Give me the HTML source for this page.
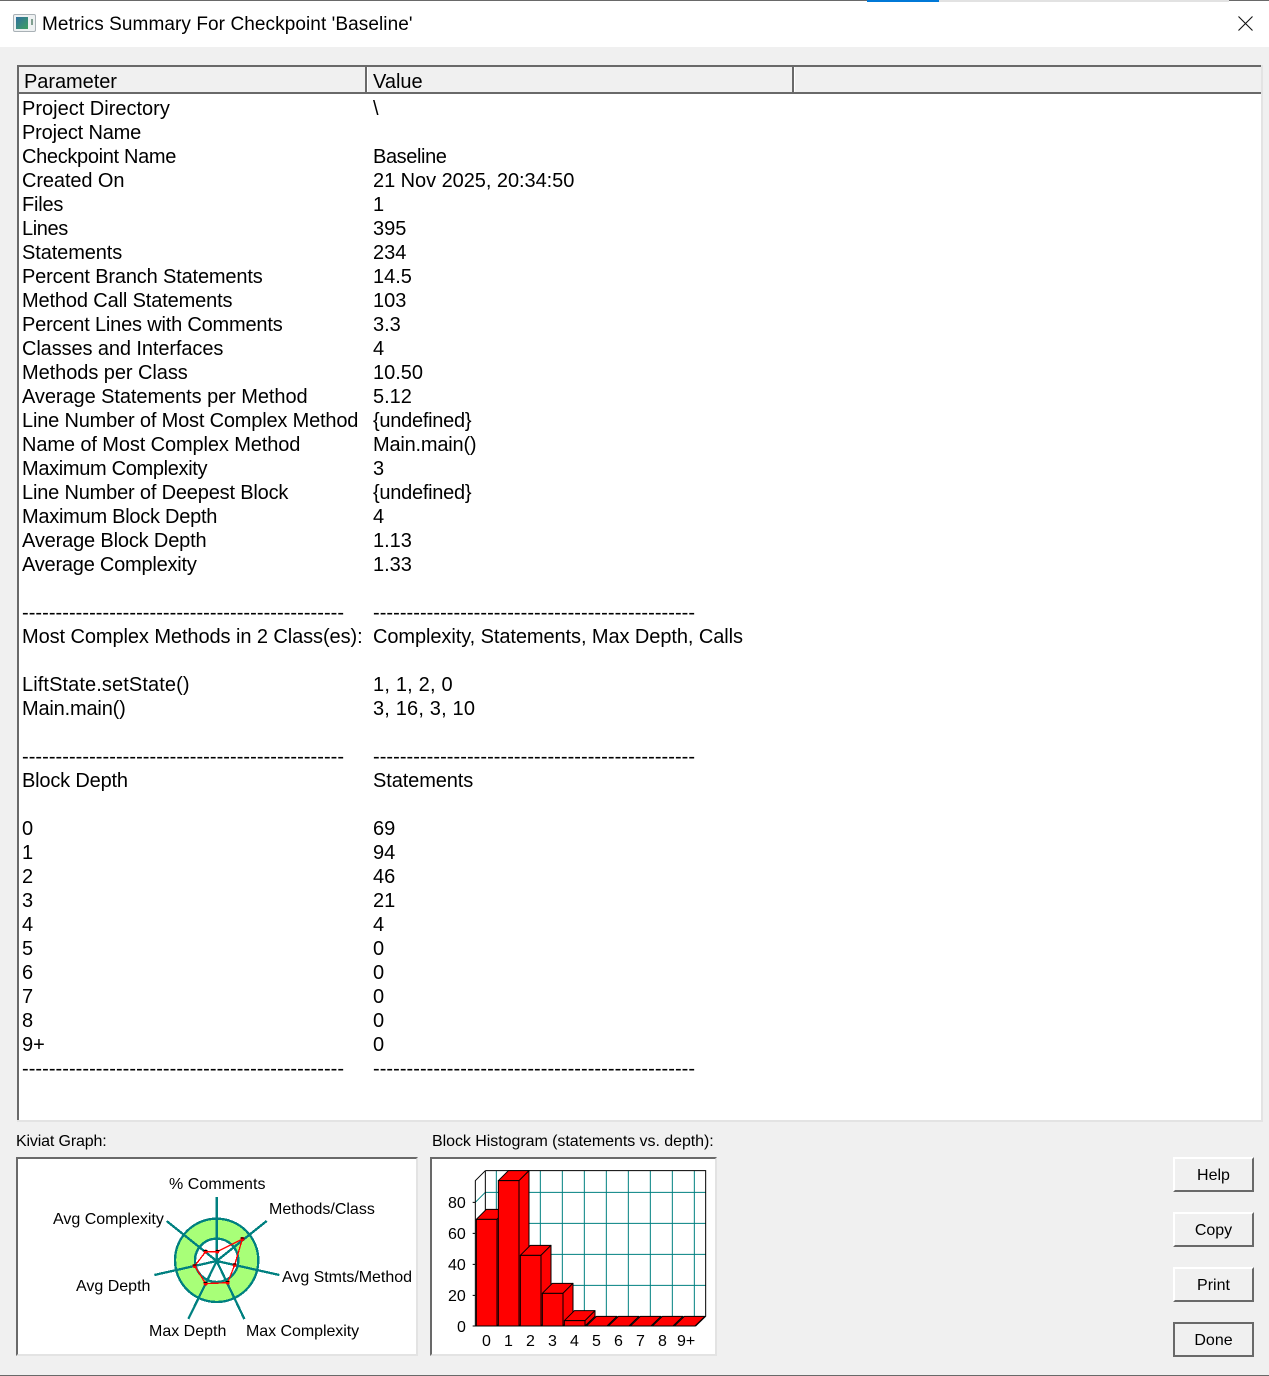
<!DOCTYPE html>
<html><head><meta charset="utf-8"><style>
html,body{margin:0;padding:0}
body{width:1269px;height:1376px;position:relative;overflow:hidden;background:#f0f0f0;font-family:"Liberation Sans",Arial,sans-serif;color:#000}
.a{position:absolute;white-space:pre}
.t{font-size:20px;line-height:24px;height:24px}
.x{left:22px}.y{left:373px}
.d{letter-spacing:.05px}
.l{font-size:16px;line-height:20px;margin-top:1px}
.b{position:absolute;left:1173px;width:81px;height:35px;box-sizing:border-box;background:#f0f0f0;border:2px solid;border-color:#fff #696969 #696969 #fff;font-size:16px;line-height:34px;text-align:center}
</style></head><body>
<div class="a" style="left:0;top:0;width:1269px;height:47px;background:#fff"></div>
<div class="a" style="left:0;top:0;width:1269px;height:1px;background:#696969"></div>
<div class="a" style="left:867px;top:0;width:72px;height:2px;background:#0078d7"></div>
<div class="a" style="left:939px;top:0;width:290px;height:2px;background:#e2e2e2"></div>
<svg class="a" style="left:13px;top:14px" width="24" height="19" viewBox="0 0 24 19"><defs><linearGradient id="g" x1="0" y1="0" x2="1" y2="1"><stop offset="0" stop-color="#2f6f9f"/><stop offset="1" stop-color="#3fa060"/></linearGradient></defs><rect x=".5" y=".5" width="22" height="17" rx="1.5" fill="#eef1f2" stroke="#a9b1b6"/><rect x="3" y="3" width="12" height="12" fill="url(#g)"/><rect x="18" y="5" width="2" height="6" fill="#7f9f8f"/></svg>
<div class="a" style="left:42px;top:13px;font-size:19px;line-height:24px;letter-spacing:.08px">Metrics Summary For Checkpoint 'Baseline'</div>
<svg class="a" style="left:1237px;top:15px" width="17" height="17"><path d="M1.5 1.5L15.5 15.5M15.5 1.5L1.5 15.5" stroke="#111" stroke-width="1.1" fill="none"/></svg>

<div class="a" style="left:17px;top:65px;width:1246px;height:1057px;background:#fff"></div>
<div class="a" style="left:17px;top:67px;width:1245px;height:25px;background:#f0f0f0"></div>
<div class="a" style="left:17px;top:65px;width:1246px;height:2px;background:#696969"></div>
<div class="a" style="left:17px;top:92px;width:1245px;height:2px;background:#696969"></div>
<div class="a" style="left:17px;top:65px;width:2px;height:1057px;background:#696969"></div>
<div class="a" style="left:1261px;top:65px;width:2px;height:1057px;background:#e3e3e3"></div>
<div class="a" style="left:17px;top:1120px;width:1246px;height:2px;background:#e3e3e3"></div>
<div class="a" style="left:365px;top:67px;width:2px;height:25px;background:#696969"></div>
<div class="a" style="left:367px;top:67px;width:1px;height:25px;background:#fff"></div>
<div class="a" style="left:792px;top:67px;width:2px;height:25px;background:#696969"></div>
<div class="a" style="left:794px;top:67px;width:1px;height:25px;background:#fff"></div>
<div class="a t" style="left:24px;top:70px;letter-spacing:-.05px">Parameter</div>
<div class="a t" style="left:373px;top:70px">Value</div>

<div class="a t x" style="top:97px">Project Directory</div><div class="a t y" style="top:97px">\</div>
<div class="a t x" style="top:121px;letter-spacing:-.17px">Project Name</div>
<div class="a t x" style="top:145px;letter-spacing:-.33px">Checkpoint Name</div><div class="a t y" style="top:145px;letter-spacing:-.4px">Baseline</div>
<div class="a t x" style="top:169px;letter-spacing:-.1px">Created On</div><div class="a t y" style="top:169px;letter-spacing:-.05px">21 Nov 2025, 20:34:50</div>
<div class="a t x" style="top:193px;letter-spacing:-.2px">Files</div><div class="a t y" style="top:193px">1</div>
<div class="a t x" style="top:217px;letter-spacing:-.4px">Lines</div><div class="a t y" style="top:217px">395</div>
<div class="a t x" style="top:241px;letter-spacing:-.1px">Statements</div><div class="a t y" style="top:241px">234</div>
<div class="a t x" style="top:265px;letter-spacing:-.16px">Percent Branch Statements</div><div class="a t y" style="top:265px">14.5</div>
<div class="a t x" style="top:289px;letter-spacing:-.14px">Method Call Statements</div><div class="a t y" style="top:289px">103</div>
<div class="a t x" style="top:313px;letter-spacing:-.19px">Percent Lines with Comments</div><div class="a t y" style="top:313px">3.3</div>
<div class="a t x" style="top:337px;letter-spacing:-.1px">Classes and Interfaces</div><div class="a t y" style="top:337px">4</div>
<div class="a t x" style="top:361px;letter-spacing:-.06px">Methods per Class</div><div class="a t y" style="top:361px">10.50</div>
<div class="a t x" style="top:385px;letter-spacing:-.07px">Average Statements per Method</div><div class="a t y" style="top:385px">5.12</div>
<div class="a t x" style="top:409px;letter-spacing:-.18px">Line Number of Most Complex Method</div><div class="a t y" style="top:409px;letter-spacing:-.27px">{undefined}</div>
<div class="a t x" style="top:433px;letter-spacing:-.11px">Name of Most Complex Method</div><div class="a t y" style="top:433px;letter-spacing:-.2px">Main.main()</div>
<div class="a t x" style="top:457px;letter-spacing:-.33px">Maximum Complexity</div><div class="a t y" style="top:457px">3</div>
<div class="a t x" style="top:481px;letter-spacing:-.18px">Line Number of Deepest Block</div><div class="a t y" style="top:481px;letter-spacing:-.27px">{undefined}</div>
<div class="a t x" style="top:505px;letter-spacing:-.26px">Maximum Block Depth</div><div class="a t y" style="top:505px">4</div>
<div class="a t x" style="top:529px;letter-spacing:-.16px">Average Block Depth</div><div class="a t y" style="top:529px">1.13</div>
<div class="a t x" style="top:553px;letter-spacing:-.22px">Average Complexity</div><div class="a t y" style="top:553px">1.33</div>
<div class="a t x d" style="top:601px">------------------------------------------------</div><div class="a t y d" style="top:601px">------------------------------------------------</div>
<div class="a t x" style="top:625px;letter-spacing:-.08px">Most Complex Methods in 2 Class(es):</div><div class="a t y" style="top:625px;letter-spacing:-.08px">Complexity, Statements, Max Depth, Calls</div>
<div class="a t x" style="top:673px;letter-spacing:.1px">LiftState.setState()</div><div class="a t y" style="top:673px;letter-spacing:.2px">1, 1, 2, 0</div>
<div class="a t x" style="top:697px;letter-spacing:-.18px">Main.main()</div><div class="a t y" style="top:697px;letter-spacing:.17px">3, 16, 3, 10</div>
<div class="a t x d" style="top:745px">------------------------------------------------</div><div class="a t y d" style="top:745px">------------------------------------------------</div>
<div class="a t x" style="top:769px;letter-spacing:-.18px">Block Depth</div><div class="a t y" style="top:769px;letter-spacing:-.1px">Statements</div>
<div class="a t x" style="top:817px">0</div><div class="a t y" style="top:817px">69</div>
<div class="a t x" style="top:841px">1</div><div class="a t y" style="top:841px">94</div>
<div class="a t x" style="top:865px">2</div><div class="a t y" style="top:865px">46</div>
<div class="a t x" style="top:889px">3</div><div class="a t y" style="top:889px">21</div>
<div class="a t x" style="top:913px">4</div><div class="a t y" style="top:913px">4</div>
<div class="a t x" style="top:937px">5</div><div class="a t y" style="top:937px">0</div>
<div class="a t x" style="top:961px">6</div><div class="a t y" style="top:961px">0</div>
<div class="a t x" style="top:985px">7</div><div class="a t y" style="top:985px">0</div>
<div class="a t x" style="top:1009px">8</div><div class="a t y" style="top:1009px">0</div>
<div class="a t x" style="top:1033px">9+</div><div class="a t y" style="top:1033px">0</div>
<div class="a t x d" style="top:1057px">------------------------------------------------</div><div class="a t y d" style="top:1057px">------------------------------------------------</div>

<div class="a l" style="left:16px;top:1131px;letter-spacing:-.15px">Kiviat Graph:</div>
<div class="a l" style="left:432px;top:1131px;letter-spacing:-.05px">Block Histogram (statements vs. depth):</div>

<div class="a" style="left:16px;top:1157px;width:402px;height:199px;box-sizing:border-box;background:#fff;border:2px solid;border-color:#696969 #e3e3e3 #e3e3e3 #696969"></div>
<div class="a" style="left:430px;top:1157px;width:287px;height:199px;box-sizing:border-box;background:#fff;border:2px solid;border-color:#696969 #e3e3e3 #e3e3e3 #696969"></div>

<svg class="a" style="left:0;top:1120px" width="430" height="256" viewBox="0 0 1290 768" shape-rendering="crispEdges">
<circle cx="650" cy="421" r="125" fill="#a8ff78" stroke="#008080" stroke-width="7"/>
<circle cx="650" cy="421" r="65" fill="#fff" stroke="#008080" stroke-width="7"/>
<path d="M650 231V423M650 423L800 303M650 423L838 465M650 423L733 597M650 423L565 597M650 423L463 465M650 423L500 303" stroke="#008080" stroke-width="7" fill="none"/>
<path d="M652 395L727 357L704 435L683 488L617 491L584 438L617 395Z" stroke="#f00" stroke-width="4" fill="none"/>
<g fill="#f00"><circle cx="652" cy="395" r="6"/><circle cx="727" cy="357" r="6"/><circle cx="704" cy="435" r="6"/><circle cx="683" cy="488" r="6"/><circle cx="617" cy="491" r="6"/><circle cx="584" cy="438" r="6"/><circle cx="617" cy="395" r="6"/></g>
<path d="M646 392h12M721 354h12M698 432h12M677 485h12M611 488h12M578 435h12M611 392h12" stroke="#000" stroke-width="3" fill="none"/>
</svg>
<div class="a l" style="left:169px;top:1174px;letter-spacing:.05px">% Comments</div>
<div class="a l" style="left:269px;top:1199px">Methods/Class</div>
<div class="a l" style="left:53px;top:1209px">Avg Complexity</div>
<div class="a l" style="left:282px;top:1267px;letter-spacing:-.03px">Avg Stmts/Method</div>
<div class="a l" style="left:76px;top:1276px">Avg Depth</div>
<div class="a l" style="left:149px;top:1321px">Max Depth</div>
<div class="a l" style="left:246px;top:1321px;letter-spacing:-.05px">Max Complexity</div>

<svg class="a" style="left:425px;top:1120px" width="300" height="256" viewBox="0 0 900 768">
<path d="M214 152V589M346 152V589M412 152V589M478 152V589M544 152V589M610 152V589M676 152V589M742 152V589M808 152V589M181 217H842M181 310H842M181 403H842M181 496H842M181 217L151 247" stroke="#008080" stroke-width="3" fill="none"/>
<path d="M181 152H842V589L812 618M181 152V589M181 152L151 182V618M151 618H812M151 247H143M151 340H143M151 433H143M151 526H143M151 618H143" stroke="#000" stroke-width="3" fill="none"/>
<g fill="#f00" stroke="#000" stroke-width="3" stroke-linejoin="round">
<path d="M154 298L184 268H246L216 298Z"/><path d="M216 298L246 268V589L216 618Z"/><rect x="154" y="298" width="62" height="320"/>
<path d="M220 182L250 152H312L282 182Z"/><path d="M282 182L312 152V589L282 618Z"/><rect x="220" y="182" width="62" height="436"/>
<path d="M286 406L316 376H378L348 406Z"/><path d="M348 406L378 376V589L348 618Z"/><rect x="286" y="406" width="62" height="212"/>
<path d="M352 520L382 490H444L414 520Z"/><path d="M414 520L444 490V589L414 618Z"/><rect x="352" y="520" width="62" height="98"/>
<path d="M418 602L448 572H510L480 602Z"/><path d="M480 602L510 572V589L480 618Z"/><rect x="418" y="602" width="62" height="16"/>
<path d="M484 618L514 589H576L546 618Z"/><path d="M550 618L580 589H642L612 618Z"/><path d="M616 618L646 589H708L678 618Z"/><path d="M682 618L712 589H774L744 618Z"/><path d="M748 618L778 589H840L810 618Z"/>
</g>
</svg>
<div class="a l" style="left:448px;top:1193px">80</div>
<div class="a l" style="left:448px;top:1224px">60</div>
<div class="a l" style="left:448px;top:1255px">40</div>
<div class="a l" style="left:448px;top:1286px">20</div>
<div class="a l" style="left:457px;top:1317px">0</div>
<div class="a l" style="left:482px;top:1331px">0</div>
<div class="a l" style="left:504px;top:1331px">1</div>
<div class="a l" style="left:526px;top:1331px">2</div>
<div class="a l" style="left:548px;top:1331px">3</div>
<div class="a l" style="left:570px;top:1331px">4</div>
<div class="a l" style="left:592px;top:1331px">5</div>
<div class="a l" style="left:614px;top:1331px">6</div>
<div class="a l" style="left:636px;top:1331px">7</div>
<div class="a l" style="left:658px;top:1331px">8</div>
<div class="a l" style="left:677px;top:1331px">9+</div>

<div class="b" style="top:1157px">Help</div>
<div class="b" style="top:1212px">Copy</div>
<div class="b" style="top:1267px">Print</div>
<div class="b" style="top:1322px;border-color:#696969">Done</div>
<div class="a" style="left:0;top:1375px;width:1269px;height:1px;background:#696969"></div>
</body></html>
